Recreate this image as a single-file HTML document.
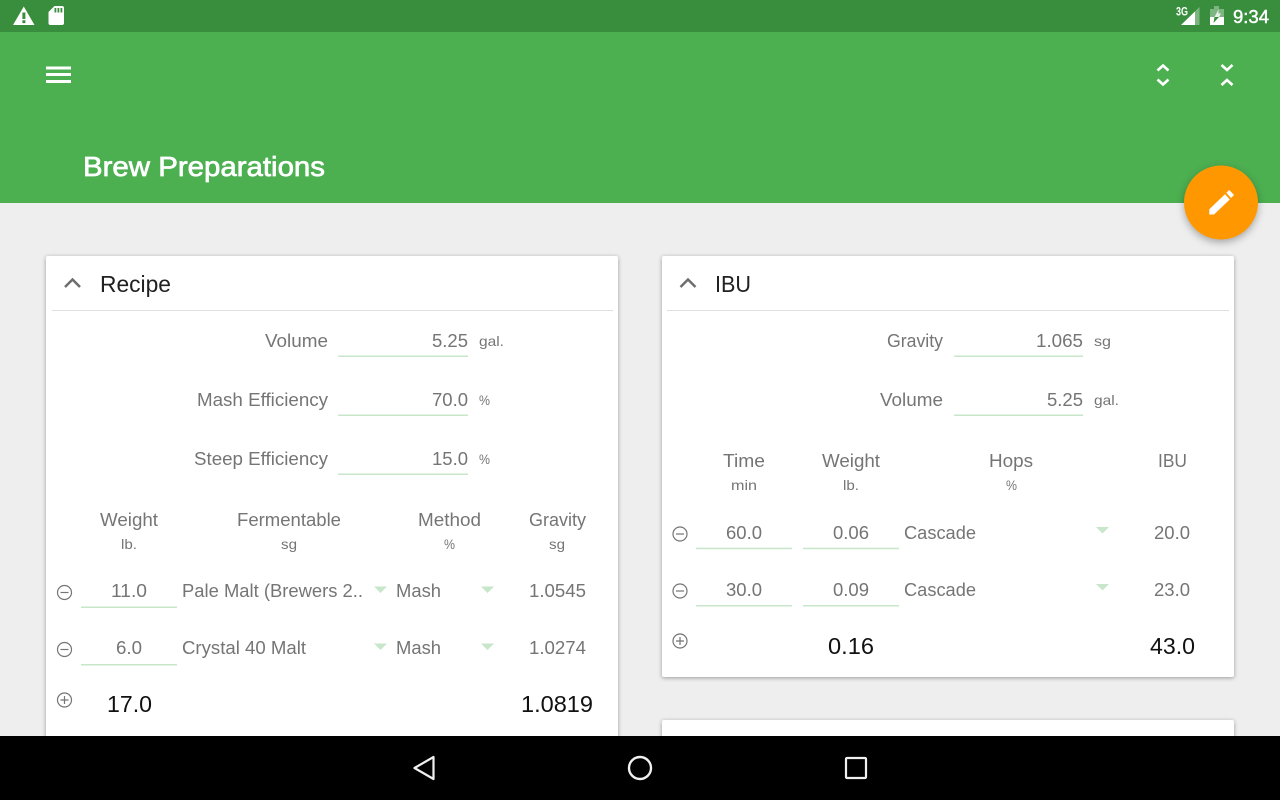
<!DOCTYPE html>
<html><head><meta charset="utf-8"><style>
html,body{margin:0;padding:0;width:1280px;height:800px;overflow:hidden;background:#eee}
svg{display:block}
text{font-family:"Liberation Sans",sans-serif}
.g{fill:#757575;font-size:18px}
.s{fill:#757575;font-size:14px}
.k{fill:#111;font-size:23px}
.h{fill:#212121;font-size:23.5px}
.u{fill:#c8e6c9}
.a{fill:#c8e6c9}
.c{fill:none;stroke:#757575;stroke-width:1.2}
.card{filter:drop-shadow(0 1px 2px rgba(0,0,0,.35))}
</style></head><body>
<svg width="1280" height="800" viewBox="0 0 1280 800" xmlns="http://www.w3.org/2000/svg">
<rect width="1280" height="800" fill="#eeeeee"/>
<rect y="32" width="1280" height="171" fill="#4caf50"/>
<rect width="1280" height="32" fill="#388e3c"/>

<!-- status icons -->
<path fill="#fff" fill-rule="evenodd" d="M13 25L23.800 6.500 34.500 25zM22.400 12.500v6.500h3v-6.500zM22.400 20.300v2.800h3v-2.800z"/>
<path fill="#fff" fill-rule="evenodd" d="M54.500 6H62a2 2 0 0 1 2 2v15a2 2 0 0 1-2 2H50.500a2 2 0 0 1-2-2V12zM54.500 8v4.500h1.800V8zM57.500 8v4.500h1.800V8zM60.500 8v4.500h1.800V8z"/>
<text x="1176" y="15.500" font-size="11.500" font-weight="bold" fill="#fff" textLength="12" lengthAdjust="spacingAndGlyphs">3G</text>
<path fill="#fff" opacity=".35" d="M1181 25L1199.500 7v18z"/>
<path fill="#fff" d="M1181 25L1195 11.500V25z"/>
<path fill="#fff" opacity=".35" d="M1210 9h4V6h5v3h5v8h-14z"/>
<path fill="#fff" d="M1210 17h14v8h-14z"/>
<path fill="#fff" opacity=".8" d="M1218.500 9.500l-4 7.500h4.500l2-3.500h-2.500z"/>
<path fill="#388e3c" d="M1214.500 17h4.500l-5.500 6z"/>
<text x="1233" y="23" font-size="18.500" fill="#fff" stroke="#fff" stroke-width=".45" textLength="36" lengthAdjust="spacingAndGlyphs">9:34</text>

<!-- app bar -->
<rect x="46" y="66.500" width="25" height="3" fill="#fff"/>
<rect x="46" y="73" width="25" height="3" fill="#fff"/>
<rect x="46" y="80" width="25" height="3" fill="#fff"/>
<g fill="none" stroke="#fff" stroke-width="2.600">
<path d="M1157.500 70.500l5.500-5 5.500 5M1157.500 79.500l5.500 5 5.500-5"/>
<path d="M1221.500 65l5.500 5 5.500-5M1221.500 85l5.500-5 5.500 5"/>
</g>
<text x="83" y="176" font-size="27.500" fill="#fff" stroke="#fff" stroke-width=".7" textLength="242" lengthAdjust="spacingAndGlyphs">Brew Preparations</text>

<!-- cards -->
<rect class="card" x="46" y="256" width="572" height="500" rx="2" fill="#fff"/>
<rect class="card" x="662" y="256" width="572" height="421" rx="2" fill="#fff"/>
<rect class="card" x="662" y="720" width="572" height="40" rx="2" fill="#fff"/>

<!-- Recipe -->
<path d="M65 287l7.500-7.500 7.500 7.500" fill="none" stroke="#6e6e6e" stroke-width="2.500"/>
<text class="h" x="100" y="292" textLength="71" lengthAdjust="spacingAndGlyphs">Recipe</text>
<rect x="52" y="310" width="561" height="1" fill="#e0e0e0"/>

<text class="g" x="265" y="347" textLength="63" lengthAdjust="spacingAndGlyphs">Volume</text>
<text class="g" x="432" y="347" textLength="36" lengthAdjust="spacingAndGlyphs">5.25</text>
<text class="s" x="479" y="346" textLength="25" lengthAdjust="spacingAndGlyphs">gal.</text>
<rect class="u" x="338" y="355.500" width="130" height="1.500"/>

<text class="g" x="197" y="406" textLength="131" lengthAdjust="spacingAndGlyphs">Mash Efficiency</text>
<text class="g" x="432" y="406" textLength="36" lengthAdjust="spacingAndGlyphs">70.0</text>
<text class="s" x="479" y="405" textLength="11" lengthAdjust="spacingAndGlyphs">%</text>
<rect class="u" x="338" y="414.500" width="130" height="1.500"/>

<text class="g" x="194" y="465" textLength="134" lengthAdjust="spacingAndGlyphs">Steep Efficiency</text>
<text class="g" x="432" y="465" textLength="36" lengthAdjust="spacingAndGlyphs">15.0</text>
<text class="s" x="479" y="464" textLength="11" lengthAdjust="spacingAndGlyphs">%</text>
<rect class="u" x="338" y="473.500" width="130" height="1.500"/>

<text class="g" x="100" y="526" textLength="58" lengthAdjust="spacingAndGlyphs">Weight</text>
<text class="s" x="121" y="549" textLength="16" lengthAdjust="spacingAndGlyphs">lb.</text>
<text class="g" x="237" y="526" textLength="104" lengthAdjust="spacingAndGlyphs">Fermentable</text>
<text class="s" x="281" y="549" textLength="16" lengthAdjust="spacingAndGlyphs">sg</text>
<text class="g" x="418" y="526" textLength="63" lengthAdjust="spacingAndGlyphs">Method</text>
<text class="s" x="444" y="549" textLength="11" lengthAdjust="spacingAndGlyphs">%</text>
<text class="g" x="529" y="526" textLength="57" lengthAdjust="spacingAndGlyphs">Gravity</text>
<text class="s" x="549" y="549" textLength="16" lengthAdjust="spacingAndGlyphs">sg</text>

<circle class="c" cx="64.500" cy="592.500" r="7"/><path class="c" d="M60.500 592.500h8"/>
<text class="g" x="111" y="597" textLength="36" lengthAdjust="spacingAndGlyphs">11.0</text>
<rect class="u" x="81" y="606.500" width="96" height="1.500"/>
<text class="g" x="182" y="597" textLength="181" lengthAdjust="spacingAndGlyphs">Pale Malt (Brewers 2..</text>
<path class="a" d="M374 586.500h13l-6.500 6.500z"/>
<text class="g" x="396" y="597" textLength="45" lengthAdjust="spacingAndGlyphs">Mash</text>
<path class="a" d="M481 586.500h13l-6.500 6.500z"/>
<text class="g" x="529" y="597" textLength="57" lengthAdjust="spacingAndGlyphs">1.0545</text>

<circle class="c" cx="64.500" cy="649.500" r="7"/><path class="c" d="M60.500 649.500h8"/>
<text class="g" x="116" y="654" textLength="26" lengthAdjust="spacingAndGlyphs">6.0</text>
<rect class="u" x="81" y="664" width="96" height="1.500"/>
<text class="g" x="182" y="654" textLength="124" lengthAdjust="spacingAndGlyphs">Crystal 40 Malt</text>
<path class="a" d="M374 643.500h13l-6.500 6.500z"/>
<text class="g" x="396" y="654" textLength="45" lengthAdjust="spacingAndGlyphs">Mash</text>
<path class="a" d="M481 643.500h13l-6.500 6.500z"/>
<text class="g" x="529" y="654" textLength="57" lengthAdjust="spacingAndGlyphs">1.0274</text>

<circle class="c" cx="64.500" cy="700" r="7"/><path class="c" d="M60.500 700h8M64.500 696v8"/>
<text class="k" x="107" y="712" textLength="45" lengthAdjust="spacingAndGlyphs">17.0</text>
<text class="k" x="521" y="712" textLength="72" lengthAdjust="spacingAndGlyphs">1.0819</text>

<!-- IBU -->
<path d="M680.500 287l7.500-7.500 7.500 7.500" fill="none" stroke="#6e6e6e" stroke-width="2.500"/>
<text class="h" x="715" y="292" textLength="36" lengthAdjust="spacingAndGlyphs">IBU</text>
<rect x="667" y="310" width="562" height="1" fill="#e0e0e0"/>

<text class="g" x="887" y="347" textLength="56" lengthAdjust="spacingAndGlyphs">Gravity</text>
<text class="g" x="1036" y="347" textLength="47" lengthAdjust="spacingAndGlyphs">1.065</text>
<text class="s" x="1094" y="346" textLength="17" lengthAdjust="spacingAndGlyphs">sg</text>
<rect class="u" x="954" y="355.500" width="129" height="1.500"/>

<text class="g" x="880" y="406" textLength="63" lengthAdjust="spacingAndGlyphs">Volume</text>
<text class="g" x="1047" y="406" textLength="36" lengthAdjust="spacingAndGlyphs">5.25</text>
<text class="s" x="1094" y="405" textLength="25" lengthAdjust="spacingAndGlyphs">gal.</text>
<rect class="u" x="954" y="414.500" width="129" height="1.500"/>

<text class="g" x="723" y="467" textLength="42" lengthAdjust="spacingAndGlyphs">Time</text>
<text class="s" x="731" y="490" textLength="26" lengthAdjust="spacingAndGlyphs">min</text>
<text class="g" x="822" y="467" textLength="58" lengthAdjust="spacingAndGlyphs">Weight</text>
<text class="s" x="843" y="490" textLength="16" lengthAdjust="spacingAndGlyphs">lb.</text>
<text class="g" x="989" y="467" textLength="44" lengthAdjust="spacingAndGlyphs">Hops</text>
<text class="s" x="1006" y="490" textLength="11" lengthAdjust="spacingAndGlyphs">%</text>
<text class="g" x="1158" y="467" textLength="29" lengthAdjust="spacingAndGlyphs">IBU</text>

<circle class="c" cx="680" cy="534" r="7"/><path class="c" d="M676 534h8"/>
<text class="g" x="726" y="539" textLength="36" lengthAdjust="spacingAndGlyphs">60.0</text>
<rect class="u" x="696" y="547.700" width="96" height="1.500"/>
<text class="g" x="833" y="539" textLength="36" lengthAdjust="spacingAndGlyphs">0.06</text>
<rect class="u" x="803" y="547.700" width="96" height="1.500"/>
<text class="g" x="904" y="539" textLength="72" lengthAdjust="spacingAndGlyphs">Cascade</text>
<path class="a" d="M1096 527h13l-6.500 6.500z"/>
<text class="g" x="1154" y="539" textLength="36" lengthAdjust="spacingAndGlyphs">20.0</text>

<circle class="c" cx="680" cy="591" r="7"/><path class="c" d="M676 591h8"/>
<text class="g" x="726" y="596" textLength="36" lengthAdjust="spacingAndGlyphs">30.0</text>
<rect class="u" x="696" y="605" width="96" height="1.500"/>
<text class="g" x="833" y="596" textLength="36" lengthAdjust="spacingAndGlyphs">0.09</text>
<rect class="u" x="803" y="605" width="96" height="1.500"/>
<text class="g" x="904" y="596" textLength="72" lengthAdjust="spacingAndGlyphs">Cascade</text>
<path class="a" d="M1096 584h13l-6.500 6.500z"/>
<text class="g" x="1154" y="596" textLength="36" lengthAdjust="spacingAndGlyphs">23.0</text>

<circle class="c" cx="680" cy="641" r="7"/><path class="c" d="M676 641h8M680 637v8"/>
<text class="k" x="828" y="654" textLength="46" lengthAdjust="spacingAndGlyphs">0.16</text>
<text class="k" x="1150" y="654" textLength="45" lengthAdjust="spacingAndGlyphs">43.0</text>

<!-- FAB -->
<circle cx="1221" cy="202.500" r="37" fill="#ff9800" style="filter:drop-shadow(0 3px 4px rgba(0,0,0,.3))"/>
<path fill="#fff" d="M1209.300 209.300L1225 194.300 1229.800 199.500 1214 214.500H1209.300zM1226.300 192.700L1229.300 190 1234 195 1231 198z"/>

<!-- nav -->
<rect y="736" width="1280" height="64" fill="#000"/>
<path d="M433.500 757v22l-19-11z" fill="none" stroke="#f0f0f0" stroke-width="2.200" stroke-linejoin="round"/>
<circle cx="640" cy="768" r="11" fill="none" stroke="#f0f0f0" stroke-width="2.400"/>
<rect x="846" y="758" width="20" height="20" rx="1" fill="none" stroke="#f0f0f0" stroke-width="2.200"/>
</svg>
</body></html>
